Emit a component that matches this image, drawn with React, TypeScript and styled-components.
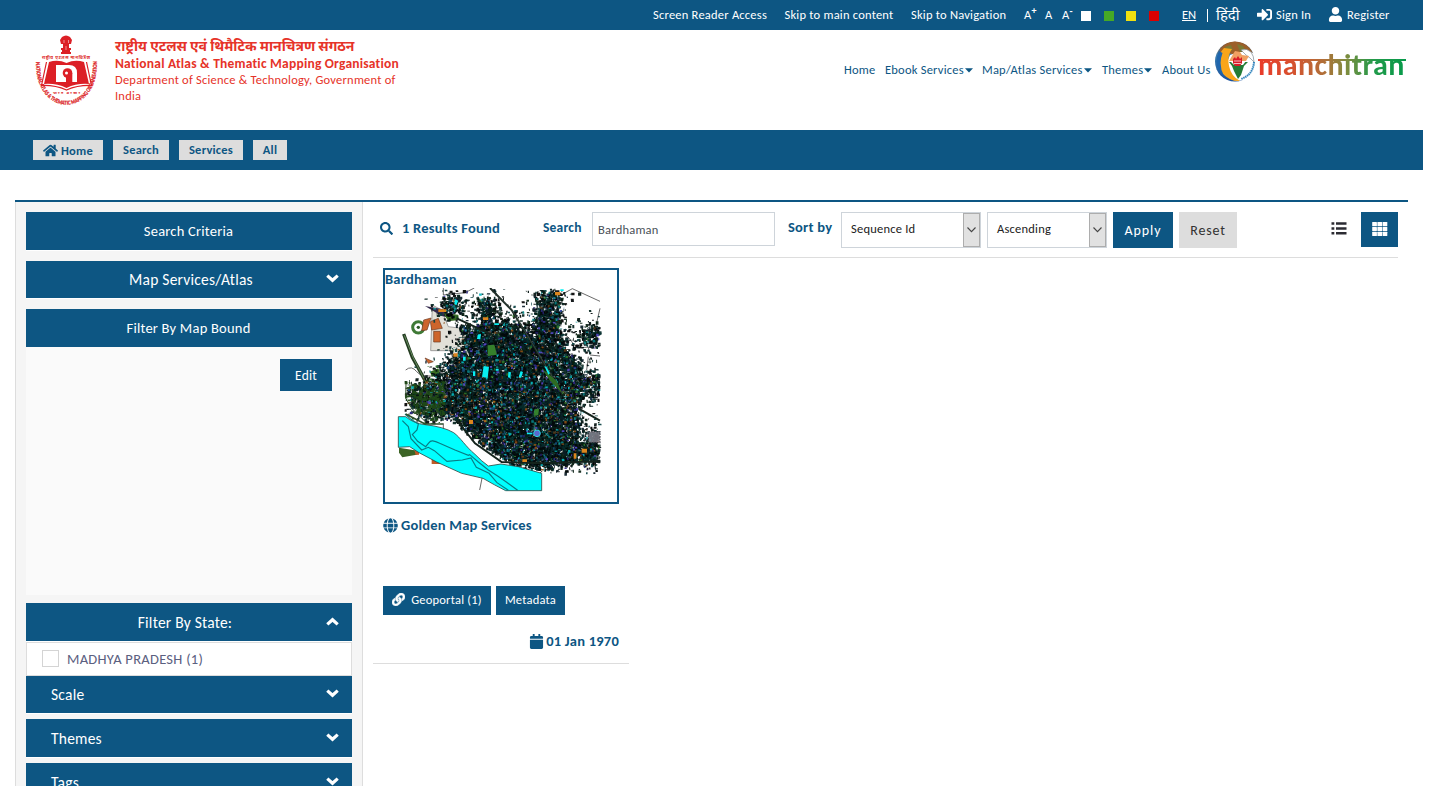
import React from "react";
import styled, { createGlobalStyle } from "styled-components";
import {
  FaHome, FaSignInAlt, FaUser, FaSearch, FaGlobe, FaLink, FaCalendar,
} from "react-icons/fa";

const BLUE = "#0d5683";

const Global = createGlobalStyle`
  *, *::before, *::after { box-sizing: border-box; }
  html, body { margin: 0; background: #fff; overflow: hidden; }
  body { font-family: Calibri, Carlito, Lato, "Noto Sans", sans-serif; color: ${BLUE}; }
  svg { display: block; flex: none; }
`;

const Page = styled.div`
  width: 1423px;
  height: 786px;
  overflow: hidden;
`;

const T = styled.span<{ $s?: number; $ls?: number; $b?: boolean }>`
  font-size: ${(p) => p.$s ?? 12.5}px;
  letter-spacing: ${(p) => p.$ls ?? 0.22}px;
  font-weight: ${(p) => (p.$b ? 700 : 400)};
  white-space: nowrap;
`;

/* ---------- top bar ---------- */
const TopBar = styled.div`
  height: 30px;
  padding-left: 653px;
  background: ${BLUE};
  color: #fff;
  display: flex;
  align-items: center;
`;
const Slot = styled.div<{ $w: number }>`
  flex: none;
  width: ${(p) => p.$w}px;
  height: 30px;
  display: flex;
  align-items: center;
  gap: 4px;
  & > span { padding-bottom: 2px; }
  & > svg { margin-bottom: 1px; }
`;
const Sup = styled.sup`
  font-size: 10px;
  font-weight: 700;
  line-height: 0;
  align-self: flex-start;
  margin: 11px 0 0 -4px;
`;
const Swatch = styled.i<{ $c: string }>`
  width: 10px;
  height: 10px;
  margin-top: 2px;
  background: ${(p) => p.$c};
`;
const Lang = styled(T)`
  text-decoration: underline;
`;
const Divider = styled.i`
  width: 1px;
  height: 13px;
  background: #fff;
`;

/* ---------- header ---------- */
const Header = styled.header`
  height: 100px;
  padding: 5px 17px 0 35px;
  display: flex;
  align-items: flex-start;
`;
const Brand = styled.div`
  margin-left: 17px;
  padding-top: 1px;
  width: 300px;
  display: flex;
  flex-direction: column;
  color: #e63329;
`;
const BrandLine = styled(T)<{ $h: number }>`
  line-height: ${(p) => p.$h}px;
`;
const Nav = styled.nav`
  margin-left: auto;
  padding-top: 25px;
  height: 45px;
  width: 371px;
  display: flex;
  line-height: 20px;
`;
const NavItem = styled.span<{ $w: number }>`
  width: ${(p) => p.$w}px;
  flex: none;
  display: flex;
  align-items: center;
  gap: 1px;
  height: 20px;
`;
const GlobeBox = styled.div`
  width: 41px;
  padding-top: 6px;
`;
const Word = styled.div`
  position: relative;
  width: 148px;
  height: 50px;
  margin-left: 2px;
`;
const SPECTRUM =
  "linear-gradient(90deg, #ea3a2a 0%, #d8502f 22%, #b07038 45%, #7f8c3e 60%, #239a4a 78%, #079a4a 100%)";
const WordText = styled.span`
  position: absolute;
  left: 0;
  top: 8px;
  font-size: 30px;
  line-height: 44px;
  font-weight: 700;
  letter-spacing: 0.4px;
  background: ${SPECTRUM};
  -webkit-background-clip: text;
  background-clip: text;
  color: transparent;
`;
const WordBar = styled.i`
  position: absolute;
  left: 0;
  top: 24px;
  width: 148px;
  height: 2px;
  background: ${SPECTRUM};
`;

/* ---------- breadcrumb ---------- */
const Crumbs = styled.div`
  height: 40px;
  padding: 10px 33px;
  background: ${BLUE};
  display: flex;
  gap: 10px;
`;
const Crumb = styled.span<{ $w: number }>`
  width: ${(p) => p.$w}px;
  height: 20px;
  background: #ddd;
  color: ${BLUE};
  display: flex;
  align-items: center;
  justify-content: center;
  gap: 3px;
  & > span:only-child { padding-bottom: 2px; }
`;

/* ---------- main ---------- */
const Main = styled.main`
  margin: 30px 15px 0;
  height: 600px;
  border-top: 2px solid ${BLUE};
  display: flex;
`;
const Side = styled.aside`
  width: 348px;
  padding: 10px 10px 0;
  background: #f5f5f5;
  border: solid #ddd;
  border-width: 0 1px;
`;
const Bar = styled.div<{ $h: number; $mt?: number; $left?: boolean; $shift?: number }>`
  height: ${(p) => p.$h}px;
  margin-top: ${(p) => p.$mt ?? 0}px;
  padding: 0 13px 0 25px;
  background: ${BLUE};
  color: #fff;
  box-shadow: 0 1px 0 #fff;
  display: grid;
  grid-template-columns: 1fr 13px;
  align-items: center;
  justify-items: ${(p) => (p.$left ? "start" : "center")};
  & > span { margin-left: ${(p) => p.$shift ?? 0}px; }
  & > svg { margin-bottom: 2px; }
`;
const MapBound = styled.div`
  height: 248px;
  padding: 12px 20px;
  background: #fafafa;
  display: flex;
  justify-content: flex-end;
`;
const Edit = styled.button`
  width: 52px;
  height: 32px;
  padding: 0;
  border: 0;
  background: ${BLUE};
  color: #fff;
  font-family: inherit;
`;
const StateRow = styled.label`
  margin-top: 1px;
  height: 34px;
  padding-left: 15px;
  border: 1px solid #ddd;
  background: #fff;
  color: #5b6080;
  display: flex;
  align-items: center;
  gap: 8px;
`;
const Box = styled.i`
  width: 17px;
  height: 17px;
  margin-bottom: 1px;
  border: 1px solid #d4d4d4;
`;
const Results = styled.section`
  flex: 1;
  padding: 10px 10px 0;
`;
const Tools = styled.div`
  height: 46px;
  border-bottom: 1px solid #ddd;
  display: flex;
  align-items: flex-start;
`;
const Found = styled.div`
  width: 170px;
  height: 33px;
  padding-left: 7px;
  display: flex;
  align-items: center;
  gap: 9px;
  & > span { padding-bottom: 2px; }
`;
const FieldLabel = styled.label<{ $w: number }>`
  width: ${(p) => p.$w}px;
  line-height: 30px;
`;
const Input = styled.div`
  width: 183px;
  height: 34px;
  padding: 0 5px;
  margin-right: 13px;
  border: 1px solid #ced4da;
  color: #495057;
  display: flex;
  align-items: center;
`;
const Select = styled.div<{ $w: number }>`
  width: ${(p) => p.$w}px;
  height: 36px;
  margin-right: 6px;
  padding-left: 9px;
  border: 1px solid #ced4da;
  color: #222;
  display: flex;
  align-items: center;
  justify-content: space-between;
  & > span { padding-bottom: 4px; }
`;
const Arrow = styled.i`
  width: 17px;
  height: 34px;
  border: 1px solid #adadad;
  background: #e1e1e1;
  display: flex;
  align-items: center;
  justify-content: center;
`;
const Action = styled.button<{ $w: number; $grey?: boolean }>`
  width: ${(p) => p.$w}px;
  height: 36px;
  margin-right: 6px;
  padding: 1px 0 0;
  border: 0;
  font-family: inherit;
  background: ${(p) => (p.$grey ? "#ddd" : BLUE)};
  color: ${(p) => (p.$grey ? "#333" : "#fff")};
`;
const View = styled.span<{ $on?: boolean }>`
  width: 37px;
  height: 35px;
  display: flex;
  align-items: center;
  justify-content: center;
  padding-bottom: 2px;
  background: ${(p) => (p.$on ? BLUE : "#fff")};
  color: ${(p) => (p.$on ? "#fff" : "#2c2c33")};
`;
const Views = styled.div`
  margin-left: auto;
  display: flex;
  gap: 4px;
`;
const Card = styled.article`
  width: 256px;
  height: 406px;
  padding: 10px 10px 0;
  border-bottom: 1px solid #ddd;
`;
const Thumb = styled.div`
  width: 236px;
  height: 236px;
  border: 2px solid ${BLUE};
  display: flex;
  flex-direction: column;
`;
const ThumbTitle = styled(T)`
  line-height: 19px;
  height: 18px;
`;
const Service = styled.div`
  height: 42px;
  display: flex;
  align-items: center;
  gap: 3px;
`;
const Buttons = styled.div`
  margin-top: 40px;
  display: flex;
  gap: 5px;
`;
const Small = styled.button<{ $w: number }>`
  width: ${(p) => p.$w}px;
  height: 29px;
  padding: 0 0 2px;
  border: 0;
  background: ${BLUE};
  color: #fff;
  font-family: inherit;
  display: flex;
  align-items: center;
  justify-content: center;
  gap: 6px;
`;
const DateRow = styled.div`
  margin-top: 16px;
  height: 20px;
  display: flex;
  align-items: center;
  justify-content: flex-end;
  gap: 2px;
`;

/* ---------- map thumbnail ---------- */
type Pt = [number, number];
const rng = (seed: number) => () => {
  seed = (seed + 0x6d2b79f5) | 0;
  let t = Math.imul(seed ^ (seed >>> 15), 1 | seed);
  t = (t + Math.imul(t ^ (t >>> 7), 61 | t)) ^ t;
  return ((t ^ (t >>> 14)) >>> 0) / 4294967296;
};
const inside = (x: number, y: number, poly: Pt[]) => {
  let hit = false;
  for (let i = 0, j = poly.length - 1; i < poly.length; j = i++) {
    const [xi, yi] = poly[i];
    const [xj, yj] = poly[j];
    if (yi > y !== yj > y && x < ((xj - xi) * (y - yi)) / (yj - yi) + xi) hit = !hit;
  }
  return hit;
};
const CITY: Pt[] = [
  [240, 190], [300, 205], [318, 180], [305, 118], [345, 112], [352, 160], [350, 200],
  [385, 175], [420, 195], [465, 228], [485, 150], [505, 92], [545, 90], [552, 220], [560, 262], [600, 300],
  [620, 350], [625, 400], [600, 440], [608, 500], [600, 545], [665, 560], [665, 610], [600, 595], [500, 622],
  [440, 608], [380, 596], [320, 550], [270, 500], [235, 470], [200, 465], [150, 475], [105, 430], [98, 376],
  [150, 375], [195, 340], [220, 300], [250, 285], [275, 240],
];
const PATCHES: Pt[][] = [
  [[205, 125], [260, 112], [262, 150], [225, 165], [205, 150]],
  [[608, 220], [640, 195], [674, 210], [674, 245], [640, 255]],
  [[620, 350], [672, 345], [672, 415], [630, 390]],
  [[640, 515], [674, 515], [674, 590], [640, 590]],
];
const DARK = ["#010807", "#03100e", "#04231d", "#00110e", "#052c2b", "#0a1c26", "#081f10", "#000", "#02080a", "#083f40"];
const ACCENT = ["#087c80", "#12989a", "#312a88", "#5547c4", "#8c4d14", "#2e7427", "#5a3a17", "#154a7a", "#06b9c0", "#241d66"];

const buildLayers = () => {
  const r = rng(77);
  const dark: Record<string, string> = {};
  const bright: Record<string, string> = {};
  for (let i = 0; i < 34000; i++) {
    const x = 88 + r() * 582;
    const y = 86 + r() * 552;
    const j = r() < 0.35 ? 70 : 20;
    const jx = x + (r() + r() - 1) * j;
    const jy = y + (r() + r() - 1) * j;
    const keep = inside(jx, jy, CITY) || PATCHES.some((p) => inside(jx, jy, p));
    if (!keep && !(r() < 0.008 && y < 480 && x > 200)) continue;
    if (y > 490 && x < 250) continue;
    if (y > 470 + (x - 200) * 0.7 && x >= 200 && x < 420) continue;
    const accent = r() < 0.075;
    let c = accent ? ACCENT[Math.floor(r() * ACCENT.length)] : DARK[Math.floor(r() * DARK.length)];
    if (x < 205 && y > 360 && r() < 0.3) c = "#1f4a16";
    if (x > 235 && x < 390 && y > 410 && y < 490 && r() < 0.07) c = "#b0691a";
    const big = accent ? 6 : 8;
    const w = (2 + r() * big).toFixed(1);
    const h = (2 + r() * big).toFixed(1);
    const layer = accent ? bright : dark;
    layer[c] = (layer[c] ?? "") + `M${x.toFixed(1)} ${y.toFixed(1)}h${w}l${(r() * 3 - 1.5).toFixed(1)} ${h}h-${w}z`;
  }
  return [...Object.entries(dark), ...Object.entries(bright)];
};
const LAYERS = buildLayers();

const MapThumb = () => (
  <svg width="232" height="214" viewBox="30 84 696 642">
    <g fill="none" stroke="#4c4c4c" strokeWidth="2.5">
      <path d="M205 84V105L270 98L298 84M556 106L592 86L675 124M675 145L660 210M548 215Q580 225 590 245T635 262L675 260M640 262L645 285L675 288M92 330Q110 315 125 335T190 345M640 290L635 330" />
      <path d="M322 650L314 690M205 490V612M560 600L675 595" />
    </g>
    <path d="M172 135L200 150L220 200L260 205L300 235L290 300L235 300L225 272L167 272Z" fill="#e2e0d8" stroke="#777" strokeWidth="2" />
    <path d="M86 222L112 292L155 370" fill="none" stroke="#233b20" strokeWidth="10" />
    <path d="M88 226L114 292L152 366" fill="none" stroke="#678c5f" strokeWidth="3" />
    <circle cx="130" cy="202" r="17" fill="#fff" stroke="#3f7a36" strokeWidth="9" />
    <circle cx="130" cy="202" r="5" fill="#2b5a25" />
    <path d="M166 185L190 175L202 205L170 210ZM176 214L196 214L196 246L176 246ZM146 180L168 174L156 210L140 212ZM150 294L175 305L160 310Z" fill="#cd652c" stroke="#693a22" strokeWidth="2" />
    <path d="M150 138L205 148L245 178L200 168Z" fill="#33294c" />
    <path d="M205 160L250 164L252 180L220 184ZM165 335L190 325L198 345L170 350Z" fill="#396c25" />
    {LAYERS.map(([c, d]) => (
      <path key={c} d={d} fill={c} opacity="0.92" />
    ))}
    <path d="M245 175L310 205L350 225M345 84L410 150L465 240L560 400M610 445L675 482M245 480L300 550L380 606L500 610L675 604" fill="none" stroke="#14231c" strokeWidth="6" />
    <path d="M93 372L92 415L110 445L150 484" fill="none" stroke="#2c4a24" strokeWidth="3" />
    <path d="M347 88L412 152L467 242L562 400" fill="none" stroke="#5b6b63" strokeWidth="1.5" />
    <path d="M500 325L545 362L560 398L525 362Z" fill="#2f6a22" />
    <path d="M338 256L358 254L366 284L338 288ZM478 448L492 446L490 466L477 467Z" fill="#35802c" />
    <path d="M326 318L342 320L338 354L321 350ZM400 335L408 337L406 354L399 352ZM437 333L444 336L438 354L431 350ZM308 224L318 222L316 238L306 237ZM508 318L514 320L525 340L520 344ZM362 326L371 326V332H362ZM264 290H272V302H264ZM294 334H301V348H294ZM358 190H372V195H358ZM556 88H566V93H556ZM240 118L250 122L244 136L238 132ZM456 518H472V523H456Z" fill="#08eef2" />
    <path d="M540 96H556V106H540ZM324 172H340V180H324ZM282 480H294V492H282ZM620 566H636V578H620ZM442 598H456V606H442ZM190 148H214V156H190ZM235 280H248V290H235ZM596 580H604V596H596Z" fill="#dc851e" />
    <circle cx="486" cy="520" r="10" fill="#5c69cd" stroke="#28d4df" strokeWidth="3" />
    <path d="M640 515H675V548H640Z" fill="#8b8995" stroke="#35353e" strokeWidth="4" strokeDasharray="5 3" opacity=".8" />
    <path d="M72 563L128 572L125 584L82 592L72 578Z" fill="#3c6426" />
    <path d="M170 594L205 606V612H170ZM118 570L132 574V584L122 585Z" fill="#bf5c28" />
    <path
      d="M70 470L92 470Q115 490 150 494Q205 500 236 518C258 534 270 558 300 583Q320 604 340 618L378 612L430 620L500 640V692L392 692Q360 676 324 655L260 640L185 606L132 578L104 560L70 562Z"
      fill="#0ff" stroke="#304843" strokeWidth="2.5"
    />
    <path d="M90 462L108 478L130 492L126 510L112 524L128 544L152 560L162 548Q168 536 194 550L240 570L280 586L284 584L310 606L340 630L368 648L394 666L428 691M82 482L100 500L108 536L140 570L160 562L178 572L216 604L262 600L288 594L304 622L342 640L366 668L400 691" fill="none" stroke="#087d85" strokeWidth="3.5" />
    <path d="M92 462L150 492L205 492" fill="none" stroke="#2e4f2b" strokeWidth="5" />
  </svg>
);

/* ---------- logos ---------- */
const Emblem = () => (
  <svg width="63" height="72" viewBox="0 0 63 72" fill="#dc1f26" overflow="visible">
    <path d="M27 2Q31 -1 35 2L37 5L36 9H34V13H36V15H35V17H36V19H26V17H27V15H26V13H28V9H26L25 5Z" />
    <path d="M28.500 5H29.500V8H28.500ZM33 5H34V8H33ZM30.500 11H31.500V15H30.500Z" fill="#fff" opacity=".5" />
    <text x="7" y="24" fontSize="4.400" fontWeight="700" textLength="48">राष्ट्रीय एटलस मानचित्रण</text>
    <path d="M14 27Q23 24 31.500 28Q40 24 49 27L54 49Q42 48 31.500 53Q21 48 9 49Z" />
    <path d="M11.500 27L6.500 50.500Q20 50 31.500 55Q43 50 56.500 50.500L51.500 27" fill="none" stroke="#dc1f26" strokeWidth="1.200" />
    <path d="M21 47V30H34Q42 30 42 38V47H37V43H31V47Z" fill="#fff" />
    <circle cx="32.500" cy="38" r="4.800" />
    <path d="M32.500 38H37.300V47.500H31V42Z" />
    <circle cx="31.500" cy="38" r="1.500" fill="#fff" />
    <text x="18" y="59" fontSize="3.600" fontWeight="700" textLength="27">भारत सरकार</text>
    <path id="emblemArc" d="M1 27C0 84 63 84 62 27" fill="none" />
    <text fontSize="5.400" fontWeight="900" fontFamily="Lato" stroke="#dc1f26" strokeWidth=".25">
      <textPath href="#emblemArc" textLength="118" lengthAdjust="spacingAndGlyphs">NATIONAL ATLAS &amp; THEMATIC MAPPING ORGANISATION</textPath>
    </text>
  </svg>
);

const GlobeLogo = () => (
  <svg width="41" height="41" viewBox="0 0 41 41">
    <defs>
      <linearGradient id="gl" x1="0" y1="0" x2="0" y2="1">
        <stop offset="0" stopColor="#8a4b1d" />
        <stop offset=".35" stopColor="#3c7fb0" />
        <stop offset="1" stopColor="#174f9d" />
      </linearGradient>
    </defs>
    <circle cx="20" cy="20.500" r="20" fill="url(#gl)" />
    <path d="M5 8Q15 -3 28 2.500Q37 7 38.500 15L30 12L22 15L14 12L5 16Z" fill="#9c5f2a" />
    <path d="M10 6L16 4L18 9L12 12ZM22 3L28 5L31 10L25 11Z" fill="#7b7a35" />
    <path d="M41 13Q34 10 28 11L24 11L15 14L10 26L16 38Q25 42 33 37L41 29Z" fill="#fff" />
    <path d="M26 9Q32 7 36 11Q39 15 39 21L35 17L31 14Z" fill="#fff" stroke="#7d8a94" strokeWidth=".7" />
    <path d="M9 7Q-3 20 8 33Q16 41 25 40Q16 35 14 25Q12 15 17 8Z" fill="#f9a51a" />
    <path d="M4 10Q-3 25 9 35Q3 24 7.500 12Z" fill="#1f66ae" />
    <path d="M17 15L20 10L25 11L27 14L34 15L31 20H14Z" fill="#f0a062" />
    <path d="M14 21H33L29 25L26 34L23 38L19 30L17 25Z" fill="#247c35" />
    <path d="M15 20H31L28 24H19Z" fill="#fff" />
    <path d="M18 22V18L20 16L21 18L23 15L25 18L27 16V22L25 25H20Z" fill="#d91c27" />
    <path d="M19 20H26M19 22.500H26" stroke="#fff" strokeWidth=".7" />
    <path d="M39 21Q38 34 26 38" fill="none" stroke="#3385bd" strokeWidth="2" strokeDasharray="1.500 .6" />
  </svg>
);

const SelectArrow = () => (
  <svg width="9" height="6" viewBox="0 0 9 6" fill="none" stroke="#444" strokeWidth="1.1">
    <path d="M.5 .5L4.500 4.700L8.500 .5" />
  </svg>
);
const Caret = () => (
  <svg width="8" height="5" viewBox="0 0 8 5" fill="currentColor">
    <path d="M0 .3H8L4 4.600Z" />
  </svg>
);
const Down = () => (
  <svg width="13" height="9" viewBox="0 0 13 9" fill="none" stroke="currentColor" strokeWidth="3.200">
    <path d="M1.300 1.600L6.500 6.300L11.700 1.600" />
  </svg>
);
const Up = () => (
  <svg width="13" height="9" viewBox="0 0 13 9" fill="none" stroke="currentColor" strokeWidth="3.200">
    <path d="M1.300 7.400L6.500 2.700L11.700 7.400" />
  </svg>
);
const ListIcon = () => (
  <svg width="16" height="13" viewBox="0 0 16 13" fill="currentColor">
    <path d="M.5 .3H3.300V2.800H.5ZM5 .3H15.500V2.800H5ZM.5 5.200H3.300V7.700H.5ZM5 5.200H15.500V7.700H5ZM.5 10.100H3.300V12.600H.5ZM5 10.100H15.500V12.600H5Z" />
  </svg>
);
const GridIcon = () => (
  <svg width="16" height="14" viewBox="0 0 16 14" fill="currentColor">
    {[0.2, 5.4, 10.6].map((x) =>
      [0, 4.900, 9.800].map((y) => <rect key={`${x}-${y}`} x={x} y={y} width="4.700" height="4.200" rx=".5" />)
    )}
  </svg>
);

export default function App() {
  return (
    <Page>
      <Global />
      <TopBar>
        <Slot $w={131.5}><T>Screen Reader Access</T></Slot>
        <Slot $w={126.5}><T>Skip to main content</T></Slot>
        <Slot $w={113}><T>Skip to Navigation</T></Slot>
        <Slot $w={21}><T>A</T><Sup>+</Sup></Slot>
        <Slot $w={17}><T>A</T></Slot>
        <Slot $w={19}><T>A</T><Sup>-</Sup></Slot>
        <Slot $w={23}><Swatch $c="#fff" /></Slot>
        <Slot $w={22}><Swatch $c="#46a926" /></Slot>
        <Slot $w={23}><Swatch $c="#f0e010" /></Slot>
        <Slot $w={33}><Swatch $c="#dc0000" /></Slot>
        <Slot $w={25}><Lang $ls={0}>EN</Lang></Slot>
        <Slot $w={9}><Divider /></Slot>
        <Slot $w={41}><T $s={15} $ls={0}>हिंदी</T></Slot>
        <Slot $w={71}><FaSignInAlt size={15} /><T>Sign In</T></Slot>
        <Slot $w={64}><FaUser size={15} /><T>Register</T></Slot>
      </TopBar>

      <Header>
        <Emblem />
        <Brand>
          <BrandLine $h={22} $s={14} $ls={0} $b>राष्ट्रीय एटलस एवं थिमैटिक मानचित्रण संगठन</BrandLine>
          <BrandLine $h={12} $s={13.5} $b>National Atlas &amp; Thematic Mapping Organisation</BrandLine>
          <BrandLine $h={20}>Department of Science &amp; Technology, Government of</BrandLine>
          <BrandLine $h={12}>India</BrandLine>
        </Brand>
        <Nav>
          <NavItem $w={41}><T>Home</T></NavItem>
          <NavItem $w={97}><T>Ebook Services</T><Caret /></NavItem>
          <NavItem $w={120}><T>Map/Atlas Services</T><Caret /></NavItem>
          <NavItem $w={60}><T>Themes</T><Caret /></NavItem>
          <NavItem $w={53}><T>About Us</T></NavItem>
        </Nav>
        <GlobeBox><GlobeLogo /></GlobeBox>
        <Word><WordText>manchitran</WordText><WordBar /></Word>
      </Header>

      <Crumbs>
        <Crumb $w={70}><FaHome size={15} /><T $b>Home</T></Crumb>
        <Crumb $w={56}><T $b>Search</T></Crumb>
        <Crumb $w={64}><T $b>Services</T></Crumb>
        <Crumb $w={34}><T $b>All</T></Crumb>
      </Crumbs>

      <Main>
        <Side>
          <Bar $h={38}><T $s={14.5}>Search Criteria</T></Bar>
          <Bar $h={37} $mt={11} $shift={5}><T $s={15.5}>Map Services/Atlas</T><Down /></Bar>
          <Bar $h={38} $mt={11}><T $s={14.5}>Filter By Map Bound</T></Bar>
          <MapBound><Edit><T $s={13.5} $ls={0.2}>Edit</T></Edit></MapBound>
          <Bar $h={38} $mt={8} $shift={-7}><T $s={15.5}>Filter By State:</T><Up /></Bar>
          <StateRow><Box /><T $s={14.5} $ls={0.28}>MADHYA PRADESH (1)</T></StateRow>
          <Bar $h={37} $left><T $s={15.5}>Scale</T><Down /></Bar>
          <Bar $h={38} $mt={6} $left><T $s={15.5}>Themes</T><Down /></Bar>
          <Bar $h={38} $mt={6} $left><T $s={15.5}>Tags</T><Down /></Bar>
        </Side>
        <Results>
          <Tools>
            <Found><FaSearch size={13} /><T $s={14.5} $b>1 Results Found</T></Found>
            <FieldLabel $w={49}><T $s={13.5} $b>Search</T></FieldLabel>
            <Input><T>Bardhaman</T></Input>
            <FieldLabel $w={53}><T $s={14.5} $b>Sort by</T></FieldLabel>
            <Select $w={140}><T>Sequence Id</T><Arrow><SelectArrow /></Arrow></Select>
            <Select $w={120}><T>Ascending</T><Arrow><SelectArrow /></Arrow></Select>
            <Action $w={60}><T $s={14} $ls={0.9}>Apply</T></Action>
            <Action $w={58} $grey><T $s={14} $ls={0.8}>Reset</T></Action>
            <Views><View><ListIcon /></View><View $on><GridIcon /></View></Views>
          </Tools>
          <Card>
            <Thumb><ThumbTitle $s={14.5} $b>Bardhaman</ThumbTitle><MapThumb /></Thumb>
            <Service><FaGlobe size={15} /><T $s={14.5} $b>Golden Map Services</T></Service>
            <Buttons>
              <Small $w={108}><FaLink size={13} stroke="currentColor" strokeWidth={26} /><T>Geoportal (1)</T></Small>
              <Small $w={69}><T>Metadata</T></Small>
            </Buttons>
            <DateRow><FaCalendar size={15} /><T $s={14.5} $b>01 Jan 1970</T></DateRow>
          </Card>
        </Results>
      </Main>
    </Page>
  );
}
